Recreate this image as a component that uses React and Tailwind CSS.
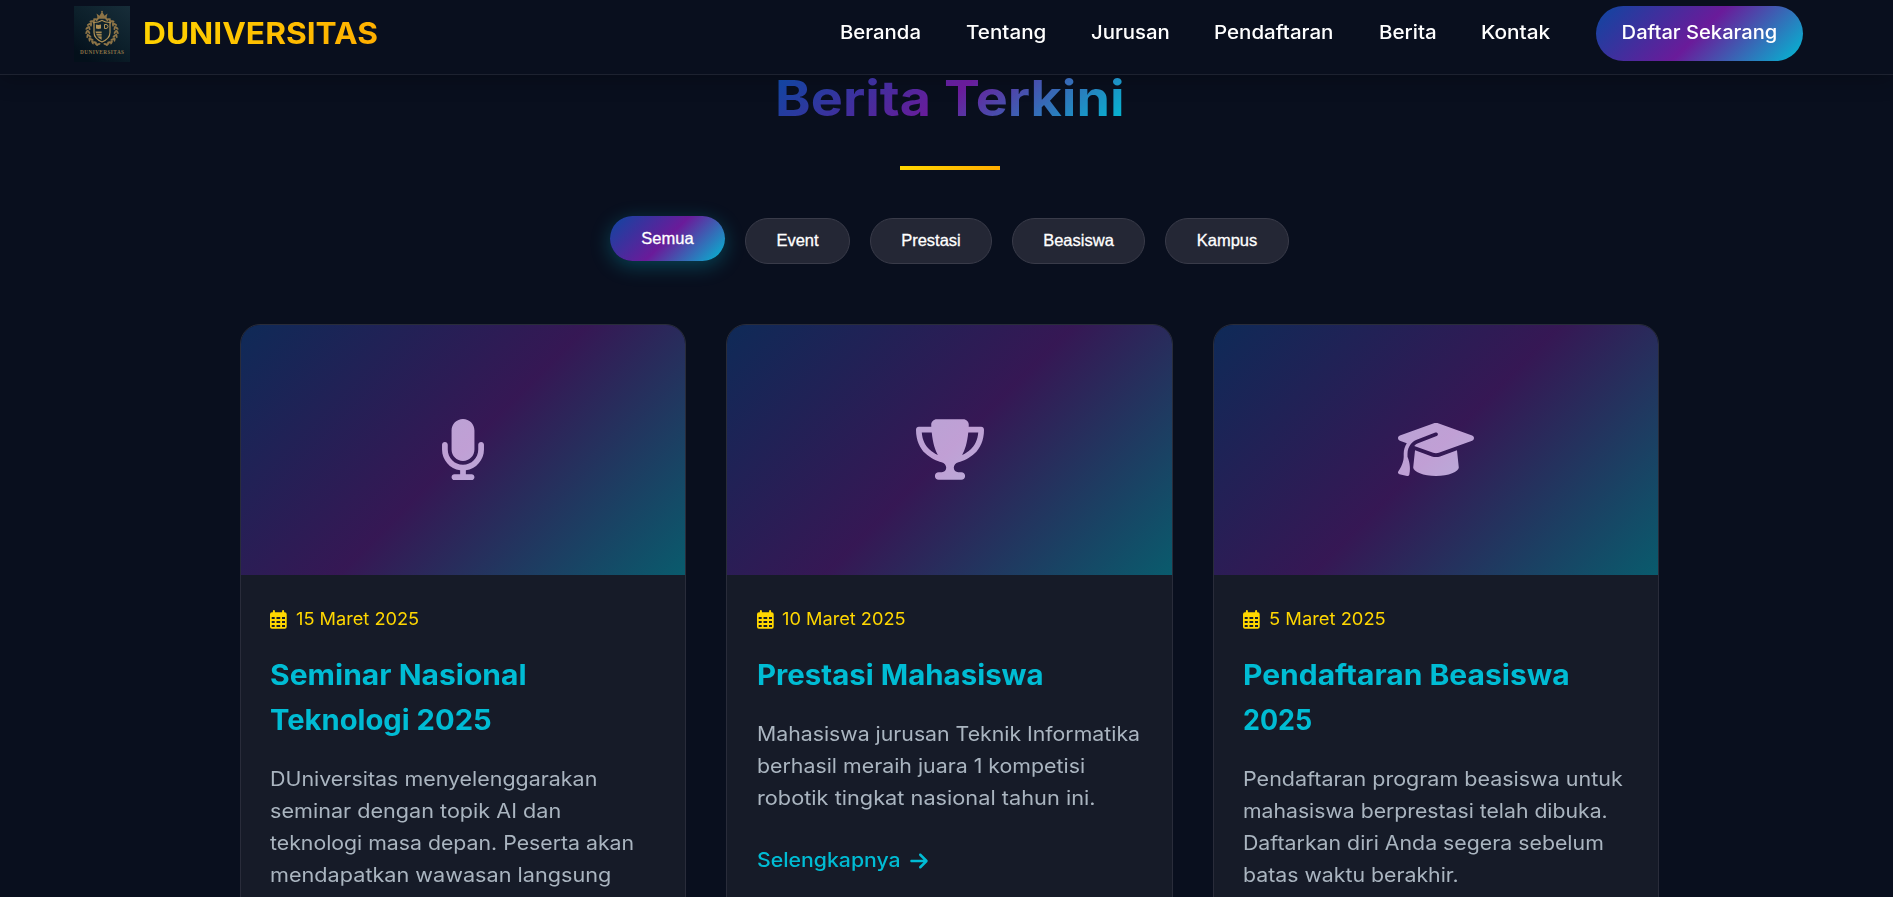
import React from "react";
import { FaMicrophone, FaTrophy, FaGraduationCap, FaArrowRight } from "react-icons/fa6";

const navLinks = [
  { label: "Beranda", box: "w-[81px]", stretch: "scale-x-[1.07]" },
  { label: "Tentang", box: "w-[80px]", stretch: "scale-x-[1.085]" },
  { label: "Jurusan", box: "w-[78px]", stretch: "scale-x-[1.07]" },
  { label: "Pendaftaran", box: "w-[120px]", stretch: "scale-x-[1.08]" },
  { label: "Berita", box: "w-[57px]", stretch: "scale-x-[1.08]" },
  { label: "Kontak", box: "w-[71px]", stretch: "scale-x-[1.096]" },
];

const filters = [
  { label: "Event", box: "w-[105px]" },
  { label: "Prestasi", box: "w-[122px]" },
  { label: "Beasiswa", box: "w-[133px]" },
  { label: "Kampus", box: "w-[124px]" },
];

const articles = [
  {
    icon: FaMicrophone,
    iconSize: "h-[61px] w-[46px]",
    date: ["15 Maret 2025", "scale-x-[1.046]"],
    title: [["Seminar Nasional", "scale-x-[1.073]"], ["Teknologi 2025", "scale-x-[1.042]"]],
    body: [
      ["DUniversitas menyelenggarakan", "scale-x-[1.083]"],
      ["seminar dengan topik AI dan", "scale-x-[1.092]"],
      ["teknologi masa depan. Peserta akan", "scale-x-[1.075]"],
      ["mendapatkan wawasan langsung", "scale-x-[1.094]"],
    ],
  },
  {
    icon: FaTrophy,
    iconSize: "h-[61px] w-[68px]",
    date: ["10 Maret 2025", "scale-x-[1.046]"],
    title: [["Prestasi Mahasiswa", "scale-x-[1.051]"]],
    body: [
      ["Mahasiswa jurusan Teknik Informatika", "scale-x-[1.075]"],
      ["berhasil meraih juara 1 kompetisi", "scale-x-[1.078]"],
      ["robotik tingkat nasional tahun ini.", "scale-x-[1.099]"],
    ],
  },
  {
    icon: FaGraduationCap,
    iconSize: "h-[61px] w-[76px]",
    date: ["5 Maret 2025", "scale-x-[1.055]"],
    title: [["Pendaftaran Beasiswa", "scale-x-[1.072]"], ["2025", "scale-x-[0.96]"]],
    body: [
      ["Pendaftaran program beasiswa untuk", "scale-x-[1.086]"],
      ["mahasiswa berprestasi telah dibuka.", "scale-x-[1.072]"],
      ["Daftarkan diri Anda segera sebelum", "scale-x-[1.077]"],
      ["batas waktu berakhir.", "scale-x-[1.076]"],
    ],
  },
];

function Leaf({ x, y, r }) {
  return <ellipse cx={x} cy={y} rx="1" ry="2.3" transform={`rotate(${r} ${x} ${y})`} />;
}

const leftLeaves = Array.from({ length: 9 }, (_, i) => {
  const a = ((110 + i * 17) * Math.PI) / 180;
  return { x: 28 + 14.5 * Math.cos(a), y: 25.5 + 13.5 * Math.sin(a), r: 110 + i * 17 };
});

function Crest() {
  return (
    <svg viewBox="0 0 56 56" className="size-14 shrink-0">
      <defs>
        <linearGradient id="crestBg" x1="1" y1="0" x2="0.3" y2="1">
          <stop offset="0" stopColor="#172d39" />
          <stop offset="0.55" stopColor="#0c1f2a" />
          <stop offset="1" stopColor="#04101b" />
        </linearGradient>
      </defs>
      <rect width="56" height="56" fill="url(#crestBg)" />
      <g fill="#8d7447">
        {leftLeaves.map((l, i) => (
          <React.Fragment key={i}>
            <Leaf x={l.x - 0.8} y={l.y} r={l.r + 30} />
            <Leaf x={l.x + 1.3} y={l.y} r={l.r - 30} />
            <Leaf x={56 - l.x + 0.8} y={l.y} r={-l.r - 30} />
            <Leaf x={56 - l.x - 1.3} y={l.y} r={-l.r + 30} />
          </React.Fragment>
        ))}
        <path d="M22.5 7.5l3 2.3L28 5.5l2.500 4.300 3-2.300-1.300 5.200h-8.400z" />
        <circle cx="28" cy="5.600" r="0.9" />
      </g>
      <path d="M20 16.500q4.500 0 8-2 3.500 2 8 2v10q0 6-8 9.500-8-3.500-8-9.500z" fill="#10232c" stroke="#b09155" strokeWidth="1.200" />
      <path d="M21.500 25.500H28V34q-5.500-2.500-6.500-8.500z" fill="#a58850" />
      <path d="M22 27.500h6M23 30h5M28 15v20M21 24.500h14" stroke="#10232c" strokeWidth="0.7" />
      <path d="M22 18.500l2.500 .6 2.500-.6v4l-2.500 .6-2.500-.6z" fill="#b09155" />
      <path d="M30.500 18.500h1.500q2 0 2 2t-2 2h-1.500z" fill="none" stroke="#b09155" strokeWidth="1" />
      <text x="28" y="47.500" textAnchor="middle" textLength="44" fontSize="5.200" fill="#8d7447" fontFamily="Liberation Serif, serif" fontWeight="bold">
        DUNIVERSITAS
      </text>
    </svg>
  );
}

function CalendarIcon() {
  return (
    <svg viewBox="0 0 17 19" className="h-[19px] w-[17px] shrink-0" fill="currentColor">
      <path
        fillRule="evenodd"
        d="M3.900 0a1 1 0 0 1 1 1v1.300h7.200V1a1 1 0 0 1 2 0v1.300h.6a2 2 0 0 1 2 2V16.700a2 2 0 0 1-2 2H2a2 2 0 0 1-2-2V4.300a2 2 0 0 1 2-2h.9V1a1 1 0 0 1 1-1zM1.700 7v2h3V7zM6.500 7v2h3.700V7zM12 7v2h3V7zM1.700 11v2h3v-2zM6.500 11v2h3.700v-2zM12 11v2h3v-2zM1.700 15v2h3v-2zM6.500 15v2h3.700v-2zM12 15v2h3v-2z"
      />
    </svg>
  );
}

function Article({ item }) {
  const Icon = item.icon;
  return (
    <article className="overflow-hidden rounded-[20px] border border-[#292c3a] bg-[#161b28]">
      <div className="relative flex h-[250px] items-center justify-center bg-[#101522] pb-[2px]">
        <Icon className={"text-white " + item.iconSize} />
        <div className="absolute inset-0 bg-[linear-gradient(135deg,#0d47a1_0%,#6a1b9a_50%,#00bcd4_100%)] opacity-[0.42]" />
      </div>
      <div className="px-[29.500px] pt-[30px] whitespace-nowrap">
        <div className="flex h-[29px] items-center gap-[8.500px] text-[17.400px] text-[#ffd700]">
          <CalendarIcon />
          <span className={"origin-left " + item.date[1]}>{item.date[0]}</span>
        </div>
        <h3 className="mt-[19px] text-[28px] leading-[45px] font-bold text-[#00bcd4]">
          {item.title.map(([t, stretch]) => (
            <span key={t} className={"block origin-left " + stretch}>{t}</span>
          ))}
        </h3>
        <p className="mt-[20px] text-[19.800px] leading-8 text-[#aab5c0]">
          {item.body.map(([t, stretch]) => (
            <span key={t} className={"block origin-left " + stretch}>{t}</span>
          ))}
        </p>
        {item.body.length < 4 && (
          <a className="mt-[31px] flex h-8 items-center text-[19.800px] font-medium text-[#00bcd4]">
            <span className="w-[153px] origin-left scale-x-[1.074]">Selengkapnya</span>
            <FaArrowRight className="h-5 w-[18px]" />
          </a>
        )}
      </div>
    </article>
  );
}

export default function App() {
  return (
    <div className="h-[897px] w-full overflow-hidden bg-[#090f1e] font-['Inter',sans-serif]">
      <header className="flex h-[75px] items-start border-b border-[#1d2230] pt-[6px] pl-[74px] shadow-[0_4px_20px_rgba(0,0,0,0.25)]">
        <Crest />
        <div className="ml-[13px] w-[697px]">
          <span className="inline-block origin-left scale-x-[1.075] bg-[linear-gradient(135deg,#ffd700,#ffab00)] bg-clip-text text-[29.500px] leading-[55px] font-bold text-transparent">DUNIVERSITAS</span>
        </div>
        <nav className="flex h-[55px] items-center gap-[45px] text-[19px] font-medium whitespace-nowrap text-white">
          {navLinks.map((l) => (
            <a key={l.label} className={"-mt-px origin-left " + l.box}>
              <span className={"inline-block origin-left " + l.stretch}>{l.label}</span>
            </a>
          ))}
          <a className="-ml-px flex h-[55px] w-[207px] items-center justify-center rounded-full bg-[linear-gradient(135deg,#0d47a1_0%,#6a1b9a_50%,#00bcd4_100%)] pb-px">
            <span className="scale-x-[1.06]">Daftar Sekarang</span>
          </a>
        </nav>
      </header>
      <main className="ml-[239.750px] w-[1419.500px]">
        <div className="flex flex-col items-center">
          <h2 className="scale-x-[1.1] bg-[linear-gradient(135deg,#0d47a1_0%,#6a1b9a_50%,#00bcd4_100%)] bg-clip-text text-[49px] leading-[48px] font-bold text-transparent">Berita Terkini</h2>
          <div className="mt-[43px] h-1 w-[100px] bg-[linear-gradient(135deg,#ffd700,#ffab00)]" />
        </div>
        <div className="mt-[46px] flex h-[50px] justify-center gap-5 pt-[2px] font-['Liberation_Sans',sans-serif] text-[16.500px] text-white [-webkit-text-stroke:0.3px_#fff]">
          <button className="-mt-[2px] h-[45px] w-[115px] rounded-full bg-[linear-gradient(135deg,#0d47a1_0%,#6a1b9a_50%,#00bcd4_100%)] shadow-[0_5px_20px_rgba(0,188,212,0.3)]">Semua</button>
          {filters.map((f) => (
            <button key={f.label} className={"h-[46px] rounded-full border border-[#393b49] bg-[#242735] pb-[2px] " + f.box}>{f.label}</button>
          ))}
        </div>
        <div className="mt-[58px] grid h-[700px] grid-cols-3 gap-10">
          {articles.map((a) => (
            <Article key={a.date[0]} item={a} />
          ))}
        </div>
      </main>
    </div>
  );
}
